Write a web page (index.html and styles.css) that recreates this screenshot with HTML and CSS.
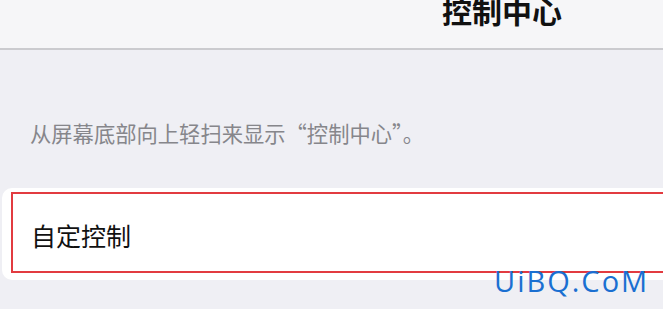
FILE: index.html
```html
<!DOCTYPE html>
<html lang="zh-CN">
<head>
<meta charset="utf-8">
<link rel="stylesheet" href="styles.css">
</head>
<body>
<div class="page">
  <header class="nav">
    <h1 class="nav-title">控制中心</h1>
  </header>
  <p class="hint">从屏幕底部向上轻扫来显示“控制中心”。</p>
  <section class="card">
    <div class="row highlight">
      <span class="row-label">自定控制</span>
    </div>
  </section>
  <div class="watermark">UiBQ.CoM</div>
</div>
</body>
</html>
```

FILE: styles.css
```css
html, body {
  margin: 0;
  padding: 0;
}
body {
  background: #efeff4;
  font-family: "Noto Sans CJK SC", "Noto Sans", sans-serif;
  width: 663px;
  height: 309px;
  overflow: hidden;
}
.page {
  position: relative;
  width: 663px;
  height: 309px;
  overflow: hidden;
}
.nav {
  height: 48px;
  background: #f6f6f8;
  border-bottom: 2px solid #cbcbcf;
  display: flex;
  align-items: flex-start;
  padding-left: 442px;
  overflow: hidden;
}
.nav-title {
  margin: -7px 0 0 0;
  font-size: 30px;
  line-height: 34px;
  font-weight: 700;
  color: #111;
  letter-spacing: 0;
}
.hint {
  margin: 70px 0 0 30px;
  font-size: 21.3px;
  line-height: 25px;
  color: #86868b;
}
.card {
  margin: 43px 0 0 2px;
  height: 92px;
  background: #ffffff;
  border-radius: 10px 0 0 10px;
  padding: 4px 0 0 9px;
  box-sizing: border-box;
}
.row {
  height: 81px;
  box-sizing: border-box;
  border: 2px solid #e23b40;
  border-right: none;
  display: flex;
  align-items: center;
  padding: 4px 0 0 18px;
}
.row-label {
  font-size: 25px;
  line-height: 30px;
  color: #111;
}
.watermark {
  position: absolute;
  left: 494px;
  top: 262px;
  font-family: "Open Sans", "Noto Sans", sans-serif;
  font-size: 29px;
  line-height: 38px;
  color: #1a6fd1;
  letter-spacing: 2px;
}
```
